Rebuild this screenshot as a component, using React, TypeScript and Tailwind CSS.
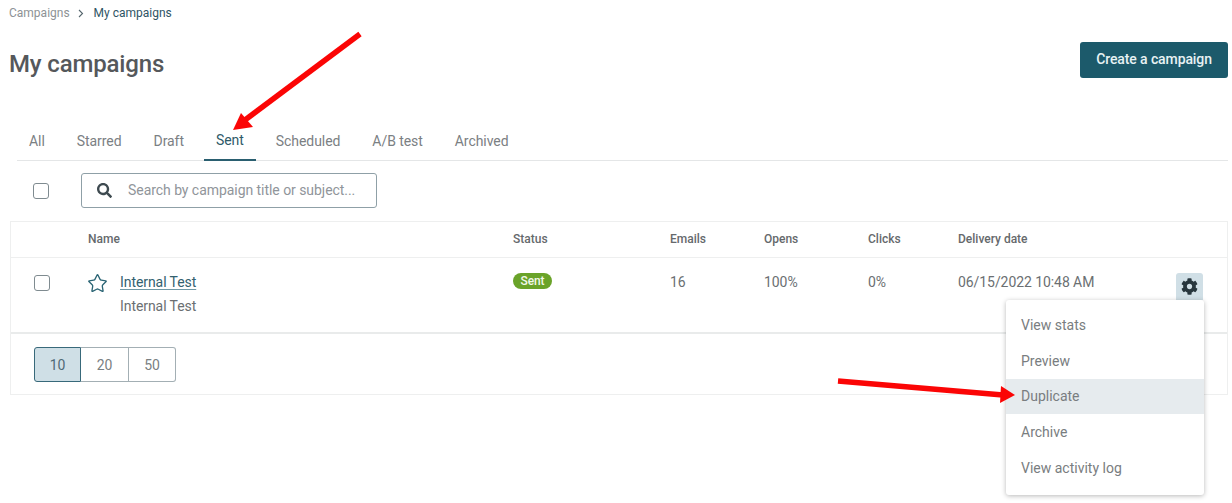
import React from 'react';
import { Star } from 'lucide-react';
import { FaCog, FaSearch } from 'react-icons/fa';

const tabs = ['All', 'Starred', 'Draft', 'Sent', 'Scheduled', 'A/B test', 'Archived'];
const menuItems = ['View stats', 'Preview', 'Duplicate', 'Archive', 'View activity log'];
const pageSizes = ['10', '20', '50'];

const Checkbox: React.FC = () => (
  <div className="w-4 h-4 rounded-[3px] border border-[#7f8b90] bg-white" />
);

const App: React.FC = () => {
  return (
    <div className="relative w-[1232px] h-[503px] overflow-hidden bg-white font-['Roboto',sans-serif] text-[#6b6f72]">
      {/* breadcrumb */}
      <div className="flex items-center h-[14px] mt-[6px] pl-[9px] text-xs">
        <span className="text-[#8d9295]">Campaigns</span>
        <svg className="w-[6px] h-[9px] ml-[8px] mr-[10px]" viewBox="0 0 6 9" fill="none" stroke="#55666d" strokeWidth="1.1">
          <path d="M1 1l3.5 3.5L1 8" />
        </svg>
        <span className="text-[#2f5565]">My campaigns</span>
      </div>

      {/* title + action */}
      <div className="flex items-center justify-between h-[36px] mt-[22px] pl-[9px] pr-1">
        <h1 className="mt-[8px] text-2xl font-medium tracking-[-0.15px] text-[#55585b]">My campaigns</h1>
        <button className="w-[148px] h-[36px] pb-[2px] rounded-[3px] bg-[#1c5a6b] text-sm font-medium tracking-[-0.1px] text-[#e8f2f4]">
          Create a campaign
        </button>
      </div>

      {/* tabs */}
      <div className="flex gap-2 h-[40px] ml-[17px] mr-1 mt-[43px] border-b border-[#e4e6e7] text-sm tracking-[-0.06px]">
        {tabs.map((tab) => (
          <div
            key={tab}
            className={
              tab === 'Sent'
                ? 'flex items-center h-[40px] px-3 pb-[1px] border-b-2 border-[#2a5f70] text-[#2f5a69]'
                : 'flex items-center h-[39px] px-3 text-[#7b8083]'
            }
          >
            {tab}
          </div>
        ))}
      </div>

      {/* toolbar */}
      <div className="flex items-center h-[35px] mt-[12px] pl-[33px]">
        <Checkbox />
        <div className="flex items-center w-[296px] h-[35px] ml-[32px] rounded-[3px] border border-[#8fa0a7]">
          <FaSearch className="w-[15px] h-[15px] ml-[15px] text-[#3e4a50]" />
          <span className="ml-[16px] -mt-[1px] text-sm tracking-[-0.05px] text-[#90959a]">Search by campaign title or subject...</span>
        </div>
      </div>

      {/* table */}
      <div className="ml-[10px] mr-1 mt-[13px] h-[174px] border border-[#eeefef]">
        <div className="grid grid-cols-[77px_425px_157px_94px_104px_90px_1fr] items-center h-[36px] pb-[2px] border-b border-[#eeefef] text-xs font-medium text-[#65696c]">
          <div />
          <div>Name</div>
          <div>Status</div>
          <div>Emails</div>
          <div>Opens</div>
          <div>Clicks</div>
          <div>Delivery date</div>
        </div>

        <div className="grid grid-cols-[77px_425px_157px_94px_104px_90px_1fr] h-[76px] border-b-2 border-[#e9ebeb] text-sm tracking-[-0.07px] text-[#6b6f72]">
          <div className="pl-[23px] pt-[17px]">
            <Checkbox />
          </div>
          <div className="flex pt-[15px]">
            <Star className="w-[21px] h-[21px] -ml-[1px] text-[#2a6474]" strokeWidth={1.5} />
            <div className="ml-[12px]">
              <div className="leading-[18px] text-[#33616f] underline underline-offset-2 decoration-[#6f98a5]">Internal Test</div>
              <div className="mt-[6px] leading-[18px]">Internal Test</div>
            </div>
          </div>
          <div className="pt-[15px]">
            <span className="flex items-center justify-center w-[39px] h-[16px] rounded-full bg-[#6aa329] text-xs font-medium text-[#f2f8ea]">
              Sent
            </span>
          </div>
          <div className="pt-[15px] leading-[18px]">16</div>
          <div className="pt-[15px] leading-[18px]">100%</div>
          <div className="pt-[15px] leading-[18px]">0%</div>
          <div className="flex justify-between pt-[15px] pr-[24px]">
            <span className="leading-[18px]">06/15/2022 10:48 AM</span>
            <div className="flex items-center justify-center w-[27px] h-[27px] rounded-t-[3px] bg-[#d0dfe6]">
              <FaCog className="w-[17px] h-[17px] text-[#27363d]" />
            </div>
          </div>
        </div>

        <div className="flex items-start h-[60px] pt-[13px] pl-[23px]">
          {pageSizes.map((size, i) => (
            <div
              key={size}
              className={
                i === 0
                  ? 'flex items-center justify-center w-[47px] h-[35px] rounded-l-[3px] border border-[#38697a] bg-[#cfdfe6] text-sm text-[#4f6a76]'
                  : i === 1
                    ? 'flex items-center justify-center w-[48px] h-[35px] border-y border-r border-[#a3afb4] text-sm text-[#7a7f82]'
                    : 'flex items-center justify-center w-[47px] h-[35px] rounded-r-[3px] border-y border-r border-[#a3afb4] text-sm text-[#7a7f82]'
              }
            >
              {size}
            </div>
          ))}
        </div>
      </div>

      {/* actions menu */}
      <div className="absolute left-[1006px] top-[300px] w-[198px] h-[195px] py-[7px] rounded-[3px] bg-white shadow-[0_1px_5px_rgba(0,0,0,0.28)] text-sm text-[#797d80]">
        {menuItems.map((item) => (
          <div
            key={item}
            className={
              item === 'Duplicate'
                ? 'flex items-center h-[35.75px] pl-[15px] bg-[#e6ebee]'
                : 'flex items-center h-[35.75px] pl-[15px]'
            }
          >
            {item}
          </div>
        ))}
      </div>

      {/* annotation arrows */}
      <svg className="absolute left-0 top-0 pointer-events-none" width="1232" height="503" viewBox="0 0 1232 503">
        <path d="M360 34 L245 120" stroke="#fb0505" strokeWidth="5.5" fill="none" />
        <polygon points="233,130 241,113 253,127" fill="#fb0505" />
        <path d="M838 381 L1003 395" stroke="#fb0505" strokeWidth="5.5" fill="none" />
        <polygon points="1015,395 1001,386 1000,403" fill="#fb0505" />
      </svg>
    </div>
  );
};

export default App;
